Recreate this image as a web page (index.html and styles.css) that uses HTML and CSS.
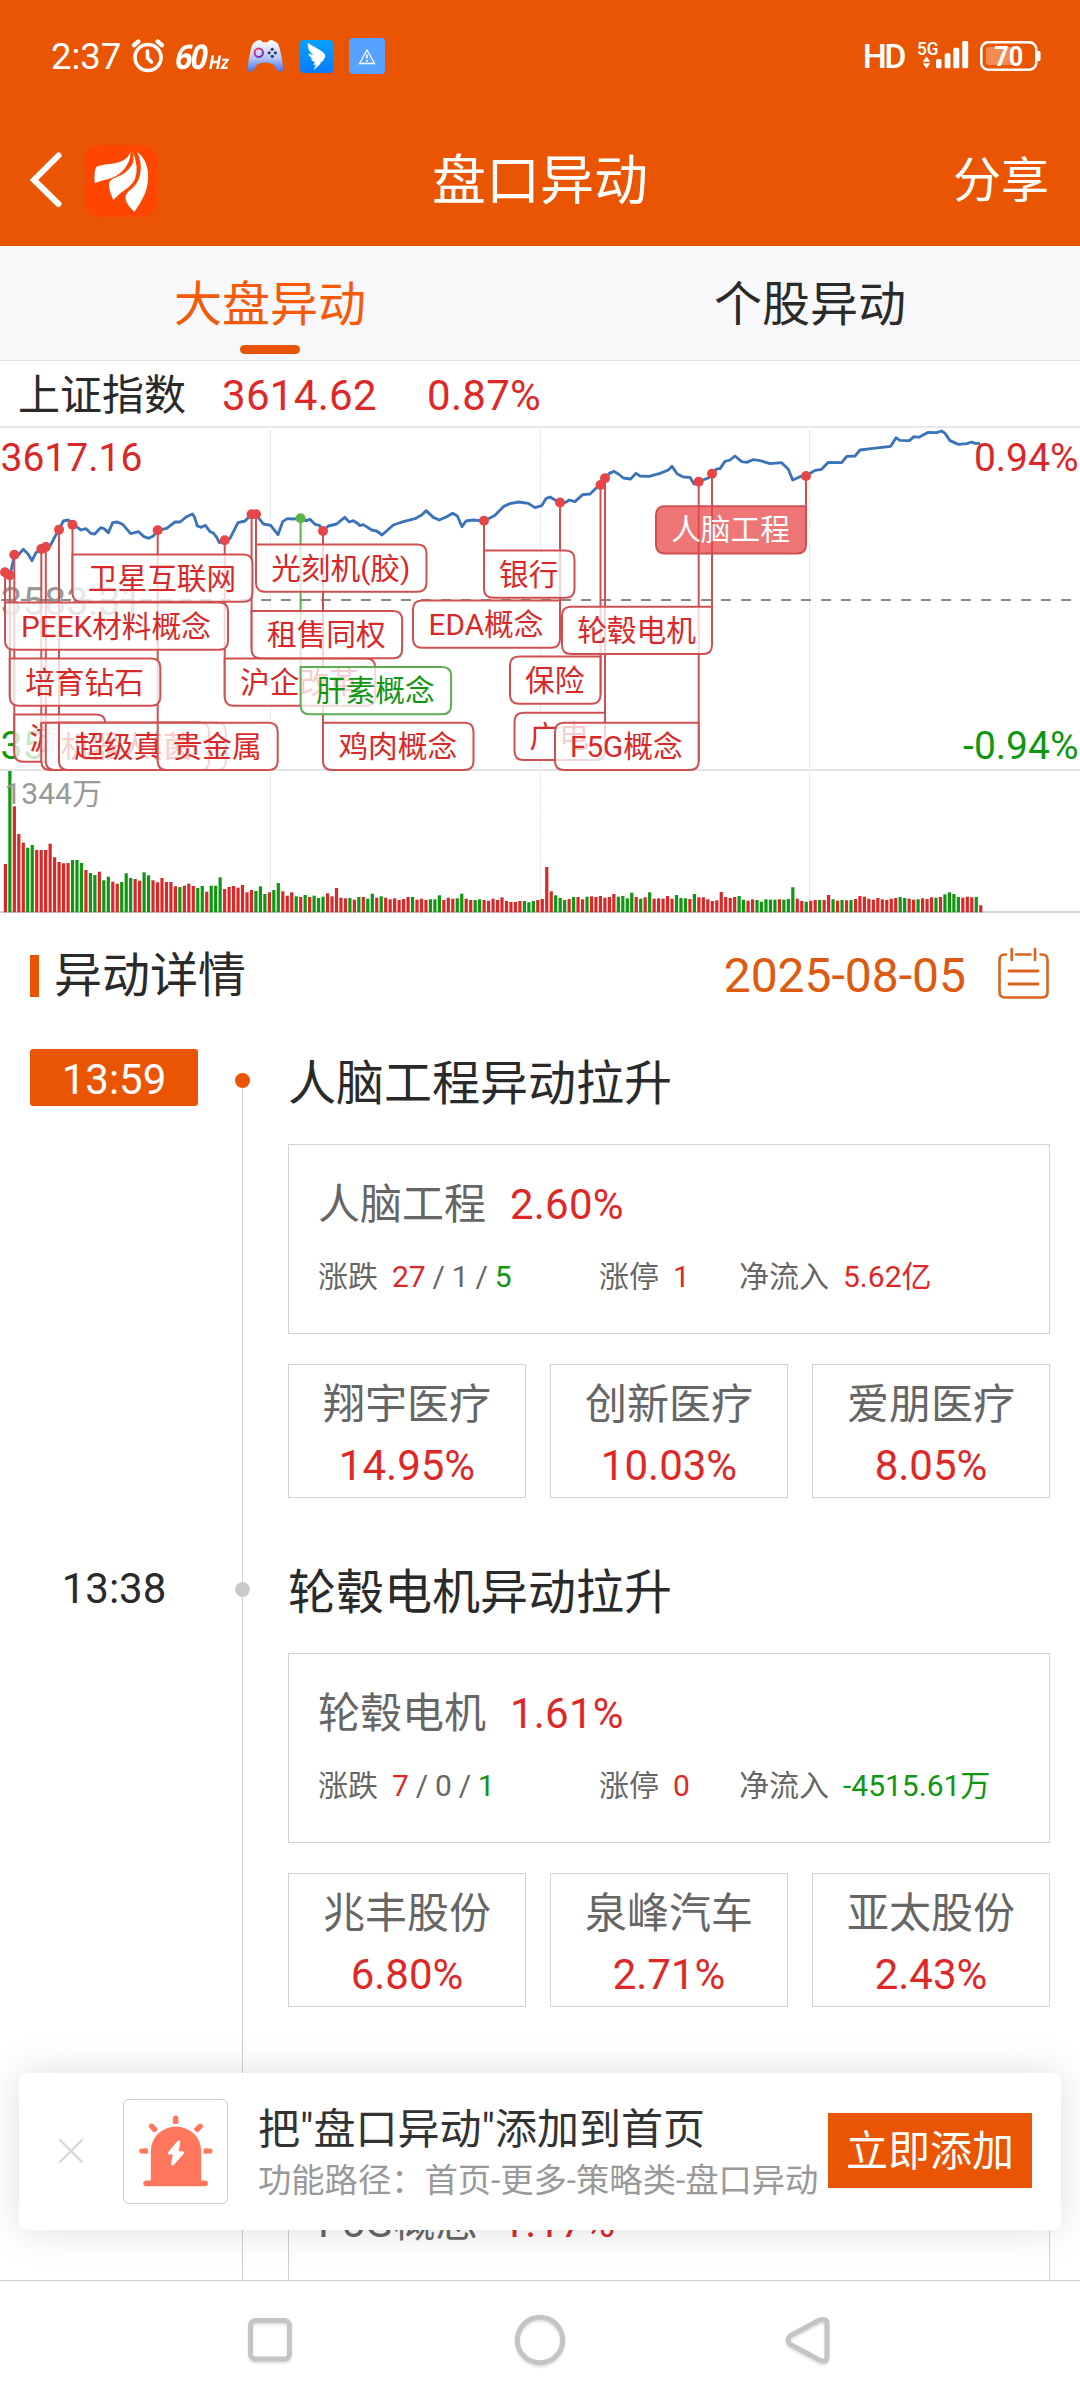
FILE: index.html
```html
<!DOCTYPE html>
<html lang="zh-CN">
<head>
<meta charset="utf-8">
<title>盘口异动</title>
<link rel="stylesheet" href="styles.css">
</head>
<body>
<div class="screen">
  <header class="top">
    <div class="status">
      <span class="clock">2:37</span>
      <svg class="alarm" width="34" height="34" viewBox="0 0 34 34" fill="none" stroke="#fff" stroke-width="3.6" stroke-linecap="round">
        <circle cx="17" cy="18.5" r="13"/><path d="M16.5 12v7l4 4"/><path d="M3.2 6.2l4-3.6M30.8 6.2l-4-3.6" stroke-width="4.5"/>
      </svg>
      <span class="hz"><b>60</b><i>Hz</i></span>
      <svg class="pad" width="36" height="34" viewBox="718 118 104 96" preserveAspectRatio="none">
        <defs>
          <linearGradient id="pad" x1="0" y1="0" x2="0" y2="1"><stop offset="0" stop-color="#fff"/><stop offset=".55" stop-color="#b9c8f8"/><stop offset="1" stop-color="#3f74f6"/></linearGradient>
          <linearGradient id="ring" x1="0" y1="0" x2="1" y2="1"><stop offset="0" stop-color="#f0475d"/><stop offset="1" stop-color="#5a2bd0"/></linearGradient>
        </defs>
        <path fill="url(#pad)" d="M745 124q12-7 18 3h15q6-10 18-3q12 3 17 23q9 35 9 57q-3 10-13 5l-16-20q-23-9-45 0l-14 19q-10 7-14-4q1-28 9-57q4-20 16-23z"/>
        <circle cx="752" cy="157" r="12" fill="none" stroke="url(#ring)" stroke-width="6"/>
        <g fill="#2d3868"><circle cx="791" cy="147" r="4.5"/><circle cx="791" cy="167" r="4.5"/><circle cx="782" cy="157" r="4.5"/><circle cx="800" cy="157" r="4.5"/></g>
      </svg>
      <svg class="wing" width="33" height="33" viewBox="871 118 96 96" preserveAspectRatio="none">
        <defs><linearGradient id="wing" x1="0" y1="0" x2="0" y2="1"><stop offset="0" stop-color="#06a2fb"/><stop offset="1" stop-color="#0a7bff"/></linearGradient></defs>
        <rect x="871" y="118" width="96" height="96" rx="10" fill="url(#wing)"/>
        <path fill="#fff" d="M893 127q18 10 39 22q14 8 12 19q-5 12-15 17l3 1l-22 20l7-16l-9-1l8-6q-12-3-13-11l9 2q-14-5-17-17l15 5q-17-11-17-35z"/>
      </svg>
      <svg class="warn" width="36" height="36" viewBox="0 0 36 36" fill="none">
        <rect width="36" height="36" rx="4" fill="#58a2ff"/>
        <path d="M18 12l7.5 13.5h-15z" stroke="#fff" stroke-width="1.3"/><path d="M18 16.5v4M18 22v1.8" stroke="#fff" stroke-width="1.6"/>
      </svg>
      <span class="hd">HD</span>
      <svg class="signal" width="52" height="30" viewBox="0 0 52 30" fill="#fff">
        <text x="0" y="14.2" font-size="19" font-weight="500" textLength="21.5" lengthAdjust="spacingAndGlyphs">5G</text>
        <path d="M9.500 15.500l3.800 5.200h-7.600zM9.500 27.500l3.800-5.200h-7.600z"/>
        <rect x="19" y="18" width="5.500" height="9.300" rx="1.500"/><rect x="27.700" y="12.300" width="5.800" height="15" rx="1.500"/><rect x="36.300" y="6.700" width="6" height="20.600" rx="1.500"/><rect x="45.200" y="0" width="6" height="27.300" rx="1.500"/>
      </svg>
      <svg class="battery" width="61" height="30" viewBox="0 0 61 30">
        <rect x="1.300" y="1.300" width="55" height="27.400" rx="7" fill="none" stroke="#fff" stroke-width="2.600"/>
        <path fill="#fff" d="M57 10h2q1.500 0 1.500 1.500v7q0 1.500-1.500 1.500h-2z"/>
        <path fill="#f28a54" d="M9 6h23v18h-23q-3 0-3-3v-12q0-3 3-3z"/>
        <text x="14.200" y="25" font-size="27" font-weight="700" fill="#fff" textLength="29" lengthAdjust="spacingAndGlyphs">70</text>
      </svg>
    </div>
    <div class="title-bar">
      <div class="title-left">
        <svg width="34" height="58" viewBox="0 0 34 58" fill="none" stroke="#fff" stroke-width="6" stroke-linecap="round" stroke-linejoin="miter"><path d="M29.500 4.500L5 29L29.500 53"/></svg>
        <svg class="logo" width="72" height="72" viewBox="246 428 208 215" preserveAspectRatio="none">
          <rect x="246" y="428" width="208" height="215" rx="44" fill="#ff4600"/>
          <g fill="#fff">
            <path d="M377 449q-10 30-52 35q-32 3-46 9q-8 15-5 49q20-8 45-14q37-12 53-50q7-14 5-29z"/>
            <path d="M383 446q8 28-3 44q-14 24-44 34q-22 8-21 24q1 18 13 44q18-21 43-37q27-22 24-62q-2-26-12-47z"/>
            <path d="M396 448q16 30 9 69q-5 26-26 43q-21 16-15 33q7 20 25 34q16-22 28-49q14-34 11-69q-5-42-32-61z"/>
          </g>
        </svg>
      </div>
      <h1>盘口异动</h1>
      <span class="share">分享</span>
    </div>
  </header>

  <nav class="tabs">
    <span class="tab active">大盘异动</span>
    <span class="tab">个股异动</span>
  </nav>

  <div class="quote"><span class="quote-name">上证指数</span><span class="quote-price">3614.62</span><span class="quote-pct">0.87%</span></div>

  <svg class="chart" id="chart" width="1080" height="486" viewBox="0 428 1080 486"></svg>

  <div class="section">
    <h2>异动详情</h2>
    <span class="date">2025-08-05</span>
    <svg width="52" height="54" viewBox="0 0 52 54" fill="none" stroke="#d9631f" stroke-width="2.600" stroke-linecap="round">
      <path d="M9 8.500H8q-5.500 0-5.500 5.500v32q0 5.500 5.500 5.500h37q5.500 0 5.500-5.500v-32q0-5.500-5.500-5.500h-1.500M19 8.500h14.500"/><path d="M14.700 3v11M38 3v11"/><path d="M12 25h29M12 38h29" stroke-width="2.800"/>
    </svg>
  </div>

  <main class="events">
    <section class="event latest">
      <div class="time"><span>13:59</span></div>
      <div class="rail"><i></i></div>
      <div class="body">
        <h3>人脑工程异动拉升</h3>
        <div class="card">
          <div class="card-head"><span>人脑工程</span><span class="up">2.60%</span></div>
          <div class="stats">
            <span>涨跌<em><b class="up">27</b> / 1 / <b class="down">5</b></em></span>
            <span>涨停<em class="up">1</em></span>
            <span>净流入<em class="up">5.62亿</em></span>
          </div>
        </div>
        <div class="stocks">
          <div class="stock"><span>翔宇医疗</span><span class="up">14.95%</span></div>
          <div class="stock"><span>创新医疗</span><span class="up">10.03%</span></div>
          <div class="stock"><span>爱朋医疗</span><span class="up">8.05%</span></div>
        </div>
      </div>
    </section>
    <section class="event">
      <div class="time"><span>13:38</span></div>
      <div class="rail"><i></i></div>
      <div class="body">
        <h3>轮毂电机异动拉升</h3>
        <div class="card">
          <div class="card-head"><span>轮毂电机</span><span class="up">1.61%</span></div>
          <div class="stats">
            <span>涨跌<em><b class="up">7</b> / 0 / <b class="down">1</b></em></span>
            <span>涨停<em class="up">0</em></span>
            <span>净流入<em class="down">-4515.61万</em></span>
          </div>
        </div>
        <div class="stocks">
          <div class="stock"><span>兆丰股份</span><span class="up">6.80%</span></div>
          <div class="stock"><span>泉峰汽车</span><span class="up">2.71%</span></div>
          <div class="stock"><span>亚太股份</span><span class="up">2.43%</span></div>
        </div>
      </div>
    </section>
    <section class="event">
      <div class="time"></div>
      <div class="rail"></div>
      <div class="body">
        <h3></h3>
        <div class="card"><div class="card-head"><span>F5G概念</span><span class="up">1.17%</span></div></div>
      </div>
    </section>
  </main>

  <aside class="promo">
    <svg class="close" width="26" height="26" viewBox="0 0 26 26" stroke="#d3d6dc" stroke-width="2.200" stroke-linecap="round"><path d="M2 2l22 22M24 2L2 24"/></svg>
    <div class="promo-icon">
      <svg width="74" height="72" viewBox="389 226 206 212" preserveAspectRatio="none">
        <path fill="#ff765d" d="M422 419v-88a69 70 0 0 1 140 0v88h10q9 0 9 9q0 8-9 8h-162q-9 0-9-8q0-9 9-9z"/>
        <path fill="none" stroke="#ff765d" stroke-width="15" stroke-linecap="round" d="M491 235v9M424 259l8 9M559 259l-8 9M397 332h9M586 332h-9"/>
        <path fill="none" stroke="#ff765d" stroke-width="15" d="M491 243v9M431 267l5 6M552 267l-5 6M405 332h9M578 332h-9"/>
        <path fill="#fff" stroke="#fff" stroke-width="8" stroke-linejoin="round" d="M500 304l-27 34h15l-6 33l29-34h-16z"/>
      </svg>
    </div>
    <div class="promo-text"><strong>把"盘口异动"添加到首页</strong><small>功能路径：首页-更多-策略类-盘口异动</small></div>
    <span class="promo-btn">立即添加</span>
  </aside>

  <footer class="keys">
    <svg width="60" height="60" viewBox="0 0 60 60"><rect x="10.500" y="10.500" width="39" height="38.500" rx="5"/></svg>
    <svg width="60" height="60" viewBox="0 0 60 60"><circle cx="30" cy="30" r="22.700"/></svg>
    <svg width="60" height="60" viewBox="2 0 60 60"><path d="M45.500 9.500q3.500 0 3.500 4v33q0 5-4.500 4.500l-4-1.500l-28-15q-5-4.500 0-9l29-15.500z"/></svg>
  </footer>
</div>
<script src="chart.js"></script>
</body>
</html>
```
FILE: styles.css
```css
* { box-sizing: border-box; margin: 0; padding: 0; }
body { width: 1080px; height: 2400px; overflow: hidden; background: #fff; color: #2a2a2a; font-family: Roboto, "Noto Sans CJK SC", sans-serif; }
h1, h2, h3, b, em, i, strong { font-weight: 400; font-style: normal; }
svg { display: block; flex: none; }
svg text { font-family: Roboto, "Noto Sans CJK SC", sans-serif; }
.screen { position: relative; width: 1080px; height: 2400px; display: flex; flex-direction: column; overflow: hidden; }
.up { color: #de2828; }
.down { color: #109610; }

.top { height: 246px; flex: none; background: #ea5504; color: #fff; }
.status { height: 112px; padding: 0 39px 0 51px; display: flex; align-items: center; }
.clock { font-size: 36.500px; line-height: 44px; width: 70px; padding-top: 2px; }
.alarm { margin-left: 10px; }
.hz { display: flex; align-items: baseline; margin-left: 11px; width: 55px; height: 40px; line-height: 40px; white-space: nowrap; font-family: "Open Sans", sans-serif; transform: skewX(-10deg); }
.hz b { font-weight: 700; font-size: 34px; letter-spacing: -2px; width: 34px; transform: scaleX(.88); transform-origin: left; }
.hz i { font-weight: 700; font-size: 19px; width: 18px; transform: scaleX(.85); transform-origin: left; }
.pad { margin-left: 16px; }
.wing { margin-left: 17px; }
.warn { margin-left: 16px; }
.hd { margin-left: auto; font-size: 34px; font-weight: 500; line-height: 40px; letter-spacing: -2.500px; }
.signal { margin-left: 13px; }
.signal text { letter-spacing: 0; }
.battery { margin-left: 11px; }
.title-bar { height: 134px; padding: 0 31px 0 29px; display: grid; grid-template-columns: 1fr auto 1fr; align-items: center; }
.title-left { display: flex; align-items: center; }
.logo { margin-left: 22px; }
.title-left svg:first-child { margin-top: -2px; }
h1 { font-size: 54px; line-height: 134px; padding-top: 3px; margin-left: 2px; }
.share { justify-self: end; font-size: 48px; line-height: 130px; padding-top: 1px; }

.tabs { height: 115px; flex: none; display: grid; grid-template-columns: 1fr 1fr; background: #f8f8fb; border-bottom: 1px solid #dfdfe2; }
.tab { display: flex; flex-direction: column; align-items: center; font-size: 48px; line-height: 70px; padding-top: 24px; }
.active { color: #f45a09; }
.active::after { content: ""; width: 60px; height: 9px; border-radius: 5px; background: #ea5504; margin-top: 5px; }

.quote { height: 67px; flex: none; display: flex; align-items: center; padding: 0 18px; border-bottom: 2px solid #e8e8e8; font-size: 42px; line-height: 60px; padding-top: 4px; }
.quote-price { margin-left: 36px; width: 205px; color: #de2828; letter-spacing: .3px; }
.quote-pct { color: #de2828; letter-spacing: .3px; }
.chart { height: 486px; }

.section { height: 135px; flex: none; display: flex; align-items: flex-start; padding: 32px 31px 0 30px; color: #dd5a10; }
h2 { display: flex; align-items: center; font-size: 48px; line-height: 60px; color: #2a2a2a; margin-right: auto; }
h2::before { content: ""; width: 9px; height: 42px; margin-right: 15px; background: #ea5504; }
.date { font-size: 48px; line-height: 60px; margin-right: 31px; }

.events { height: 1231px; flex: none; overflow: hidden; }
.event { height: 509px; display: grid; grid-template-columns: 168px 90px 762px; padding-left: 30px; }
.time { text-align: center; font-size: 42px; line-height: 61px; }
.time span { display: block; height: 57px; border-radius: 3px; }
.latest .time span { background: #ea5504; color: #fff; }
.rail { display: flex; justify-content: center; background: linear-gradient(#cfcfcf, #cfcfcf) 44px 0 / 1px 100% no-repeat; }
.latest .rail { background-position: 44px 31px; }
.rail i { width: 15px; height: 15px; margin-top: 24px; margin-right: 1px; border-radius: 50%; background: #cacaca; }
.latest .rail i { background: #ea5504; }
h3 { height: 65px; padding-top: 5px; font-size: 48px; line-height: 60px; }
.card { margin-top: 30px; height: 190px; border: 1px solid #d2d2d2; padding: 30px 29px; color: #666; }
.card-head { display: flex; gap: 24px; font-size: 42px; line-height: 60px; }
.card-head .up { letter-spacing: .2px; }
.stats { display: grid; grid-template-columns: 281px 140px auto; margin-top: 22px; font-size: 30px; line-height: 40px; white-space: nowrap; }
.stats em { margin-left: 14px; word-spacing: -.600px; }
.stocks { display: grid; grid-template-columns: repeat(3, 238px); gap: 24px; margin-top: 30px; }
.stock { display: flex; flex-direction: column; align-items: center; height: 134px; border: 1px solid #d2d2d2; padding-top: 9px; font-size: 42px; line-height: 61px; color: #666; }
.stock .up, .card .up { color: #de2828; }

.promo { position: absolute; left: 19px; top: 2073px; width: 1042px; height: 157px; display: flex; align-items: center; padding: 0 29px 0 39px; border-radius: 6px; background: #fff; box-shadow: 0 0 42px rgba(0, 0, 0, .13); }
.promo-icon { width: 105px; height: 105px; margin-left: 39px; margin-top: -1px; border: 1px solid #ccc; border-radius: 6px; display: flex; align-items: center; justify-content: center; }
.close { margin-top: -2px; }
.promo-text { margin-left: 30px; width: 570px; white-space: nowrap; color: #333; padding-top: 4px; }
.promo-text strong { display: block; font-size: 42px; line-height: 54px; }
.promo-text small { display: block; font-size: 33.300px; line-height: 48px; color: #999; }
.promo-btn { width: 204px; height: 75px; background: #ea5504; color: #fff; font-size: 42px; line-height: 78px; text-align: center; margin-top: -2px; }

.keys { height: 120px; border-top: 1px solid #d0d0d0; background: #fff; display: flex; justify-content: center; gap: 210px; padding-top: 29px; position: relative; }
.keys svg { fill: none; stroke: #c4c4c4; stroke-width: 5; filter: drop-shadow(0 2px 1px rgba(0, 0, 0, .12)); }
```
FILE: chart.js
```js
const RED = '#d92828', GREEN = '#109610';
const out = [];

// grid
out.push('<path d="M270.500 430V911M540.500 430V911M809.500 430V911" stroke="#e2e2e2" stroke-width="1" stroke-dasharray="2 1"/>');
out.push('<path d="M0 770h1080" stroke="#e4e4e4" stroke-width="2"/><path d="M0 912h1080" stroke="#d4d4d4" stroke-width="2"/>');
out.push('<path d="M1 600h1076" stroke="#888" stroke-width="2" stroke-dasharray="10 10"/>');

// axis labels
const label = (x, y, s, fill, size = 39, anchor = 'start') =>
  `<text x="${x}" y="${y}" font-size="${size}" fill="${fill}" text-anchor="${anchor}">${s}</text>`;
out.push(label(.5, 614.500, '3583.31', '#999'), label(.5, 758.500, '3549.46', GREEN));
out.push(label(1078.5, 471, '0.94%', RED, 39, 'end'), label(1078.5, 758.800, '-0.94%', GREEN, 39, 'end'));
out.push(label(.5, 471, '3617.16', RED));

// index line, in thirds of a pixel below y = 420
const line = '15,457 29,466 36,440 43,406 55,404 70,388 84,402 96,422 108,398 124,387 137,381 150,378 165,350 177,329 190,303 205,300 217,315 232,322 243,330 258,326 272,340 284,342 302,323 312,326 325,338 338,308 352,306 368,313 392,341 416,335 432,350 446,355 460,348 473,331 500,325 525,306 540,306 560,290 577,282 583,290 592,318 604,322 616,316 630,335 640,339 650,352 658,368 674,362 690,355 714,308 735,303 755,283 768,284 790,312 812,316 826,334 834,344 848,305 862,296 880,297 901,295 918,302 930,298 945,313 958,316 968,333 985,318 1010,312 1034,292 1048,306 1060,302 1070,308 1080,317 1090,314 1115,330 1130,333 1146,345 1180,315 1210,305 1245,296 1265,285 1278,272 1300,292 1318,300 1340,290 1358,280 1372,288 1386,320 1398,303 1420,300 1440,302 1452,301 1470,294 1485,286 1510,260 1530,251 1555,246 1585,250 1605,263 1625,257 1638,236 1650,231 1665,240 1680,248 1695,248 1708,240 1725,245 1748,224 1770,222 1788,205 1801,194 1815,176 1828,160 1842,154 1855,162 1870,174 1892,177 1908,160 1920,168 1948,169 1980,160 2005,150 2016,139 2032,162 2050,171 2070,172 2082,192 2096,185 2125,174 2136,162 2150,147 2160,146 2175,124 2190,120 2205,108 2225,125 2240,127 2260,119 2280,122 2310,131 2345,128 2365,148 2378,180 2400,170 2418,168 2445,151 2465,148 2485,127 2525,128 2540,109 2565,108 2580,90 2620,85 2672,79 2688,53 2700,61 2728,62 2742,50 2757,52 2785,37 2810,38 2825,33 2835,40 2850,62 2875,73 2900,71 2915,66 2925,70 2940,70';
out.push(`<polyline points="${line}" transform="translate(0 420) scale(.33333)" fill="none" stroke="#3a73b8" stroke-width="8.500" stroke-linejoin="round"/>`);

// tags: text, stem x, dot y, left, width, top, kind
const tags = [
  ['PEEK材料概念', 5, 572.3, 5, 223, 602.5],
  ['培育钻石', 9.8, 575.3, 9.8, 150.500, 658.500],
  ['游戏', 14.3, 554.8, 14.3, 91, 714.5],
  ['', 41.3, 549, 41.3, 168, 722.7],
  ['机器人概念', 45.8, 547, 45.8, 180, 722.7],
  ['超级真菌', 59, 529.700, 59, 150, 722.7],
  ['卫星互联网', 72.5, 524.7, 72.5, 180, 554.5],
  ['贵金属', 157.7, 530.3, 157.7, 120, 722.7],
  ['沪企改革', 224.7, 540.3, 224.7, 150.500, 658.500],
  ['租售同权', 251.6, 514.3, 251.6, 150.500, 611],
  ['光刻机(胶)', 256, 514.3, 256, 170.500, 544.5],
  ['肝素概念', 300.6, 518.3, 300.6, 150.500, 667, 'down'],
  ['鸡肉概念', 323, 531, 323, 150.500, 722.7],
  ['银行', 484, 520.7, 484, 90.500, 550.5],
  ['EDA概念', 560, 502.5, 413, 147, 600.5],
  ['保险', 600.5, 485, 510, 90.500, 656.5],
  ['广电', 605, 478.3, 514.500, 90.500, 712.7],
  ['F5G概念', 698.7, 481.7, 555, 143.700, 722.7],
  ['轮毂电机', 712, 473.7, 562, 150, 606.800],
  ['人脑工程', 806, 476, 656, 150, 506.300, 'on']
];
const H = 47.3, R = 9;
const tone = k => k === 'down' ? '#5cae50' : '#cf5050';
for (const [, x, y, , , top, k] of tags)
  out.push(`<path d="M${x} ${y}V${top + H - R}" stroke="${tone(k)}" stroke-width="2"/>`);
for (const [text, x, , l, w, t, k] of tags) {
  const r = l + w, b = t + H;
  // the corner the stem runs into is square
  const d = x === l
    ? `M${l} ${t}H${r - R}Q${r} ${t} ${r} ${t + R}V${b - R}Q${r} ${b} ${r - R} ${b}H${l + R}Q${l} ${b} ${l} ${b - R}Z`
    : `M${r} ${t}H${l + R}Q${l} ${t} ${l} ${t + R}V${b - R}Q${l} ${b} ${l + R} ${b}H${r - R}Q${r} ${b} ${r} ${b - R}Z`;
  const fill = k === 'on' ? '#e84848' : '#fff';
  out.push(`<path d="${d}" fill="${fill}" fill-opacity="${k === 'on' ? .75 : .77}" stroke="${tone(k)}" stroke-width="2"/>`);
  const ink = k === 'on' ? '#fff' : k === 'down' ? GREEN : RED;
  if (text) out.push(label(l + w / 2 - .5, t + 34, text, ink, 29.700, 'middle'));
}
for (const [, x, y, , , , k] of tags)
  out.push(`<circle cx="${x}" cy="${y}" r="5" fill="${k === 'down' ? '#5cb548' : '#e64648'}"/>`);

// volume: colour and bar top (thirds of a pixel below y = 760), one per minute
const vol = 'r312 g33 r139 r222 r248 g263 g255 r270 r270 r270 r251 r292 r306 r310 r309 g300 g300 g309 r330 g339 g345 r335 g361 g350 r365 r371 g366 g340 g354 r357 r362 g337 g346 r361 r367 r354 r366 r366 r379 g381 r377 r371 r378 g384 g378 r395 g377 g377 g352 r387 r381 r378 r383 r375 r397 r390 g393 g379 g402 r397 g390 g369 r394 r407 r397 g409 r411 g405 r411 g407 g414 g410 r400 r409 r384 r413 r415 g414 r419 g411 r411 g416 g401 r413 g409 r413 r418 r415 r420 r417 r411 g411 r419 r416 r420 g418 g418 g406 r420 r413 r416 g415 g401 r416 r420 g420 g418 r420 r422 r416 r420 r412 r423 r426 r426 r423 g423 g427 g423 r420 r417 r321 r394 g406 g414 g420 r417 g411 r411 r418 g410 r409 r411 r408 r413 r411 r402 g410 g408 g415 g398 r411 g416 r412 g397 r416 r415 r416 r408 r416 g405 g414 g415 r417 g402 r412 r412 r418 r423 r421 r396 r411 r414 r411 g408 g419 r422 r418 g420 g425 g418 g419 g419 r418 g419 g417 g382 r416 r423 g425 r422 r420 g420 r420 r405 g418 r422 g420 r421 g420 r417 r408 r410 r416 r419 r414 r418 r420 r416 r414 g411 g414 r416 r419 g418 r415 r417 r412 g413 r411 g403 g397 g402 g411 r413 r410 r412 g411 r436';
vol.split(' ').forEach((v, i) => {
  const top = 760 + v.slice(1) / 3;
  out.push(`<rect x="${(5.4 + i * 4.474 - 1.6).toFixed(2)}" y="${top.toFixed(1)}" width="3.2" height="${(912.3 - top).toFixed(1)}" fill="${v[0] === 'r' ? RED : GREEN}"/>`);
});
out.push(label(4.5, 803.5, '1344万', '#999', 30));
document.getElementById('chart').innerHTML = out.join('');
```
